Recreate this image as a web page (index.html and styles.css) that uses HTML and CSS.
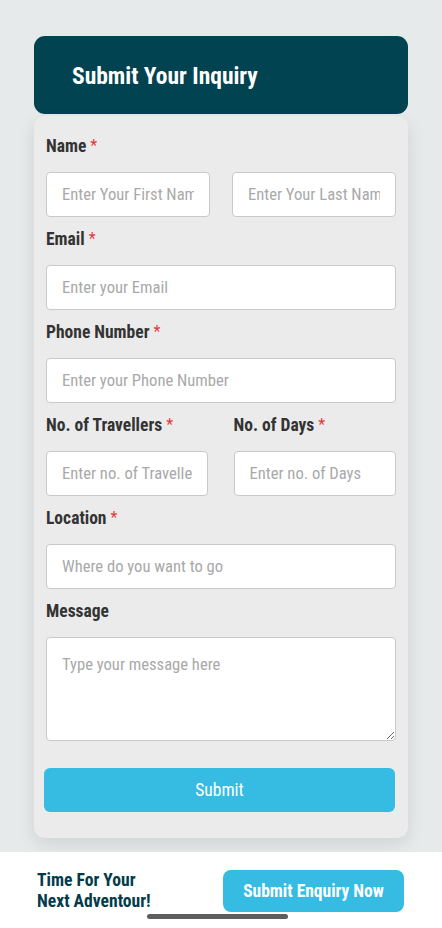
FILE: index.html
```html
<!DOCTYPE html>
<html lang="en">
<head>
<meta charset="utf-8">
<meta name="viewport" content="width=device-width, initial-scale=1">
<title>Submit Your Inquiry</title>
<link rel="stylesheet" href="styles.css">
</head>
<body>
<main class="page">
  <header class="inquiry-head">
    <h1 class="inquiry-title">Submit Your Inquiry</h1>
  </header>
  <form class="inquiry-card" onsubmit="return false;">
    <div class="field">
      <label class="label">Name <span class="req">*</span></label>
      <div class="pair pair-name">
        <input class="input" type="text" placeholder="Enter Your First Name">
        <input class="input" type="text" placeholder="Enter Your Last Name">
      </div>
    </div>
    <div class="field">
      <label class="label">Email <span class="req">*</span></label>
      <input class="input" type="email" placeholder="Enter your Email">
    </div>
    <div class="field">
      <label class="label">Phone Number <span class="req">*</span></label>
      <input class="input" type="tel" placeholder="Enter your Phone Number">
    </div>
    <div class="pair pair-trip">
      <div class="field">
        <label class="label">No. of Travellers <span class="req">*</span></label>
        <input class="input" type="text" placeholder="Enter no. of Travellers">
      </div>
      <div class="field">
        <label class="label">No. of Days <span class="req">*</span></label>
        <input class="input" type="text" placeholder="Enter no. of Days">
      </div>
    </div>
    <div class="field">
      <label class="label">Location <span class="req">*</span></label>
      <input class="input" type="text" placeholder="Where do you want to go">
    </div>
    <div class="field">
      <label class="label">Message</label>
      <textarea class="input textarea" placeholder="Type your message here"></textarea>
    </div>
    <button class="submit-btn" type="submit">Submit</button>
  </form>
</main>
<footer class="cta-bar">
  <p class="cta-text">Time For Your<br>Next Adventour!</p>
  <button class="cta-btn" type="button">Submit Enquiry Now</button>
  <span class="home-indicator"></span>
</footer>
</body>
</html>
```
FILE: styles.css
```css
* { box-sizing: border-box; }

html, body {
  margin: 0;
  padding: 0;
}

body {
  background: #e6eaeb;
  font-family: "Roboto Condensed", "DejaVu Sans Condensed", "DejaVu Sans", sans-serif;
  font-stretch: condensed;
  color: #353535;
}

.page {
  padding: 36px 34px 14px;
}

.inquiry-head {
  height: 78px;
  background: #024351;
  border-radius: 11px;
  display: flex;
  align-items: center;
  padding-left: 38px;
}

.inquiry-title {
  margin: 4px 0 0;
  color: #ffffff;
  font-size: 23.5px;
  font-weight: 700;
  line-height: 1;
}

.inquiry-card {
  margin-top: 2px;
  background: #ebebeb;
  border-radius: 11px;
  padding: 12px 12px 26px;
  box-shadow: 0 6px 18px rgba(0, 0, 0, 0.10);
}

.field {
  display: flex;
  flex-direction: column;
  margin-bottom: 4px;
}

.label {
  display: block;
  height: 34px;
  line-height: 36px;
  margin-bottom: 10px;
  font-size: 17.5px;
  font-weight: 700;
  color: #333333;
  white-space: nowrap;
}

.req {
  color: #e2393d;
  font-weight: 400;
  font-size: 16px;
  vertical-align: 1px;
}

.input {
  display: block;
  width: 100%;
  height: 45px;
  margin: 0;
  padding: 0 15px;
  border: 1px solid #c9c9c9;
  border-radius: 4px;
  background: #ffffff;
  font-family: inherit;
  font-stretch: inherit;
  font-size: 16.6px;
  color: #333;
  outline: none;
}

.input::placeholder {
  color: #a9a9a9;
}

.pair {
  display: grid;
  grid-template-columns: 1fr 1fr;
}

.pair-name {
  column-gap: 22px;
}

.pair-trip {
  column-gap: 25px;
}

.pair-trip .field:first-child .input {
  width: 162px;
}

.textarea {
  height: 104px;
  padding-top: 17px;
  resize: vertical;
  line-height: 1.2;
}

.submit-btn {
  display: block;
  width: 351px;
  height: 44px;
  margin: 27px 0 0 -2px;
  border: 0;
  border-radius: 6px;
  background: #36bbe3;
  color: #ffffff;
  font-family: inherit;
  font-stretch: inherit;
  font-size: 17.5px;
  font-weight: 400;
  cursor: pointer;
}

.cta-bar {
  position: relative;
  height: 76px;
  background: #ffffff;
  display: flex;
  align-items: center;
  justify-content: space-between;
  padding: 0 38px 0 37px;
}

.cta-text {
  margin: 2px 0 0;
  color: #033b4a;
  font-size: 17.6px;
  font-weight: 700;
  line-height: 21px;
}

.cta-btn {
  width: 181px;
  height: 42px;
  margin-top: 2px;
  border: 0;
  border-radius: 8px;
  background: #36bbe3;
  color: #ffffff;
  font-family: inherit;
  font-stretch: inherit;
  font-size: 17.5px;
  font-weight: 700;
  white-space: nowrap;
  cursor: pointer;
}

.home-indicator {
  position: absolute;
  left: 147px;
  bottom: 9px;
  width: 141px;
  height: 5px;
  border-radius: 3px;
  background: #5e5e5e;
}
```
